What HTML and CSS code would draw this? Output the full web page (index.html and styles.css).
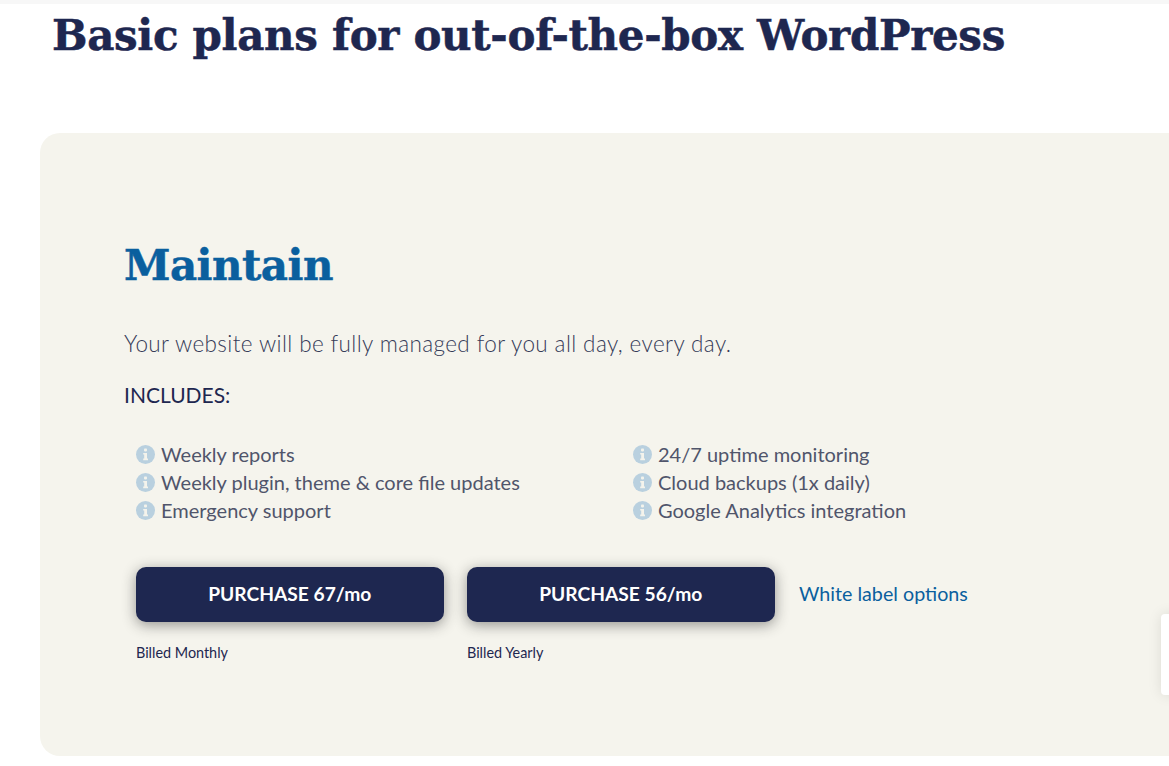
FILE: index.html
```html
<!DOCTYPE html>
<html lang="en">

<head>
    <meta charset="UTF-8">
    <title>Basic plans</title>
    <link rel="stylesheet" href="styles.css">
</head>

<body>
    <div class="topbar"></div>
    <h1 class="page-tit">Basic plans for out-of-the-box WordPress</h1>

    <div class="plan">
        <h2 class="plan-tit">Maintain</h2>
        <p class="plan-desc">Your website will be fully managed for you all day, every day.</p>
        <p class="plan-inc">INCLUDES:</p>

        <div class="features">
            <ul>
                <li><svg class="info" viewBox="0 0 19 19"><circle cx="9.5" cy="9.5" r="9.5" fill="#b9d0df"/><rect x="8" y="3.6" width="3" height="2.8" rx=".8" fill="#f4f3ec"/><path d="M7.2 8h3.8v5.6h1v1.6H7.2v-1.6h1V9.600H7.200z" fill="#f4f3ec"/></svg>Weekly reports</li>
                <li><svg class="info" viewBox="0 0 19 19"><circle cx="9.5" cy="9.5" r="9.5" fill="#b9d0df"/><rect x="8" y="3.6" width="3" height="2.8" rx=".8" fill="#f4f3ec"/><path d="M7.2 8h3.8v5.6h1v1.6H7.2v-1.6h1V9.600H7.200z" fill="#f4f3ec"/></svg>Weekly plugin, theme &amp; core file updates</li>
                <li><svg class="info" viewBox="0 0 19 19"><circle cx="9.5" cy="9.5" r="9.5" fill="#b9d0df"/><rect x="8" y="3.6" width="3" height="2.8" rx=".8" fill="#f4f3ec"/><path d="M7.2 8h3.8v5.6h1v1.6H7.2v-1.6h1V9.600H7.200z" fill="#f4f3ec"/></svg>Emergency support</li>
            </ul>
            <ul>
                <li><svg class="info" viewBox="0 0 19 19"><circle cx="9.5" cy="9.5" r="9.5" fill="#b9d0df"/><rect x="8" y="3.6" width="3" height="2.8" rx=".8" fill="#f4f3ec"/><path d="M7.2 8h3.8v5.6h1v1.6H7.2v-1.6h1V9.600H7.200z" fill="#f4f3ec"/></svg>24/7 uptime monitoring</li>
                <li><svg class="info" viewBox="0 0 19 19"><circle cx="9.5" cy="9.5" r="9.5" fill="#b9d0df"/><rect x="8" y="3.6" width="3" height="2.8" rx=".8" fill="#f4f3ec"/><path d="M7.2 8h3.8v5.6h1v1.6H7.2v-1.6h1V9.600H7.200z" fill="#f4f3ec"/></svg>Cloud backups (1x daily)</li>
                <li><svg class="info" viewBox="0 0 19 19"><circle cx="9.5" cy="9.5" r="9.5" fill="#b9d0df"/><rect x="8" y="3.6" width="3" height="2.8" rx=".8" fill="#f4f3ec"/><path d="M7.2 8h3.8v5.6h1v1.6H7.2v-1.6h1V9.600H7.200z" fill="#f4f3ec"/></svg>Google Analytics integration</li>
            </ul>
        </div>

        <div class="buy">
            <div class="buy-item">
                <a class="btn" href="#">PURCHASE 67/mo</a>
                <span class="billed">Billed Monthly</span>
            </div>
            <div class="buy-item">
                <a class="btn" href="#">PURCHASE 56/mo</a>
                <span class="billed">Billed Yearly</span>
            </div>
            <a class="white-label" href="#">White label options</a>
        </div>
    </div>

    <div class="side-widget"></div>
</body>

</html>
```

FILE: styles.css
```css
* {
    padding: 0;
    margin: 0;
    box-sizing: border-box;
    list-style: none;
}

html,
body {
    height: 766px;
    overflow: hidden;
}

body {
    position: relative;
    background: #fff;
    font-family: "Lato", "Noto Sans", sans-serif;
    color: #1e2750;
}

.topbar {
    height: 4px;
    background: #f7f7f7;
}

.page-tit {
    height: 129px;
    padding: 7px 0 0 52px;
    font-family: "DejaVu Serif", serif;
    font-size: 42px;
    line-height: 50px;
    font-weight: 700;
    letter-spacing: -0.33px;
    white-space: nowrap;
    -webkit-text-stroke: 0.5px #1e2750;
}

.plan {
    height: 623px;
    margin: 0 -40px 0 40px;
    padding: 105px 0 0 84px;
    background: #f5f4ed;
    border-radius: 20px;
}

.plan-tit {
    font-family: "DejaVu Serif", serif;
    font-size: 42px;
    line-height: 56px;
    font-weight: 700;
    letter-spacing: -0.55px;
    color: #0a5f9e;
    -webkit-text-stroke: 0.5px #0a5f9e;
}

.plan-desc {
    margin-top: 35px;
    font-size: 22.500px;
    line-height: 30px;
    font-weight: 300;
    letter-spacing: 0.39px;
    color: #363b58;
}

.plan-inc {
    margin-top: 21px;
    font-size: 21px;
    line-height: 30px;
    color: #1e2750;
}

.features {
    display: flex;
    margin-top: 30px;
    padding-left: 12px;
}

.features ul {
    width: 497px;
}

.features li {
    display: flex;
    align-items: center;
    height: 28px;
    font-size: 20px;
    color: #50556b;
}

.info {
    flex: none;
    width: 19px;
    height: 19px;
    margin-right: 6px;
}

.buy {
    display: flex;
    align-items: flex-start;
    margin-top: 43px;
    padding-left: 12px;
}

.buy-item {
    width: 331px;
}

.btn {
    display: block;
    width: 307.500px;
    height: 55px;
    line-height: 54px;
    text-align: center;
    font-size: 19.200px;
    font-weight: 700;
    color: #fff;
    text-decoration: none;
    background: #1e2750;
    border-radius: 10px;
    box-shadow: 0 3px 14px rgba(30, 30, 30, .45);
}

.billed {
    display: block;
    margin-top: 21px;
    font-size: 14.400px;
    line-height: 20px;
}

.white-label {
    margin: 15px 0 0 1px;
    font-size: 19.700px;
    line-height: 24px;
    color: #0a5f9e;
    text-decoration: none;
}

.side-widget {
    position: absolute;
    left: 1161px;
    top: 614px;
    width: 60px;
    height: 81px;
    background: #fff;
    border-radius: 4px;
    box-shadow: 0 0 14px rgba(0, 0, 0, .1);
}
```
